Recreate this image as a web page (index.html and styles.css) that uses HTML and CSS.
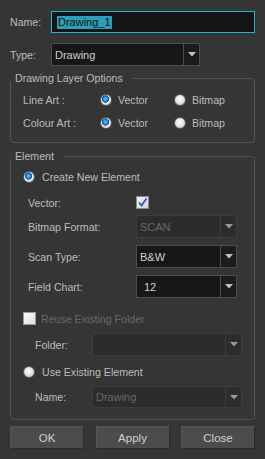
FILE: index.html
```html
<!DOCTYPE html>
<html>
<head>
<meta charset="utf-8">
<link rel="stylesheet" href="styles.css">
</head>
<body>
<div class="dialog">
  <div class="row row-name">
    <span class="lbl top-lbl">Name:</span>
    <div class="input-name"><span class="sel">Drawing_1</span></div>
  </div>
  <div class="row row-type">
    <span class="lbl top-lbl">Type:</span>
    <div class="combo combo-type"><span class="val">Drawing</span><span class="btn"><svg width="8" height="5" viewBox="0 0 8 5"><polygon points="0,0 8,0 4,4.5" fill="#c2c2c2"/></svg></span></div>
  </div>

  <fieldset class="group group-layer">
    <legend>Drawing Layer Options</legend>
    <div class="opt-row">
      <span class="opt-lbl">Line Art :</span>
      <span class="radio-item"><span class="radio on"></span>Vector</span>
      <span class="radio-item"><span class="radio"></span>Bitmap</span>
    </div>
    <div class="opt-row gap">
      <span class="opt-lbl">Colour Art :</span>
      <span class="radio-item"><span class="radio on"></span>Vector</span>
      <span class="radio-item"><span class="radio"></span>Bitmap</span>
    </div>
  </fieldset>

  <fieldset class="group group-element">
    <legend>Element</legend>
    <div class="el-row create">
      <span class="radio on"></span><span class="el-text">Create New Element</span>
    </div>
    <div class="sub-row vec">
      <span class="sub-lbl">Vector:</span>
      <span class="check on"><svg width="11" height="11" viewBox="0 0 11 11"><polyline points="2,5.5 4.5,8.5 9.5,1.5" fill="none" stroke="#2a58c8" stroke-width="1.8"/></svg></span>
    </div>
    <div class="sub-row field">
      <span class="sub-lbl">Bitmap Format:</span>
      <div class="combo combo-sm disabled"><span class="val">SCAN</span><span class="btn"><svg width="8" height="5" viewBox="0 0 8 5"><polygon points="0,0 8,0 4,4.5" fill="#9a9a9a"/></svg></span></div>
    </div>
    <div class="sub-row field">
      <span class="sub-lbl">Scan Type:</span>
      <div class="combo combo-sm"><span class="val">B&amp;W</span><span class="btn"><svg width="8" height="5" viewBox="0 0 8 5"><polygon points="0,0 8,0 4,4.5" fill="#c2c2c2"/></svg></span></div>
    </div>
    <div class="sub-row field">
      <span class="sub-lbl">Field Chart:</span>
      <div class="combo combo-sm"><span class="val pad">12</span><span class="btn"><svg width="8" height="5" viewBox="0 0 8 5"><polygon points="0,0 8,0 4,4.5" fill="#c2c2c2"/></svg></span></div>
    </div>
    <div class="el-row reuse">
      <span class="check disabled"></span><span class="el-text dim">Reuse Existing Folder</span>
    </div>
    <div class="sub-row2 field">
      <span class="sub-lbl2">Folder:</span>
      <div class="combo combo-wide disabled"><span class="val"></span><span class="btn"><svg width="8" height="5" viewBox="0 0 8 5"><polygon points="0,0 8,0 4,4.5" fill="#9a9a9a"/></svg></span></div>
    </div>
    <div class="el-row use">
      <span class="radio"></span><span class="el-text">Use Existing Element</span>
    </div>
    <div class="sub-row2 field last">
      <span class="sub-lbl2">Name:</span>
      <div class="combo combo-wide disabled"><span class="val">Drawing</span><span class="btn"><svg width="8" height="5" viewBox="0 0 8 5"><polygon points="0,0 8,0 4,4.5" fill="#9a9a9a"/></svg></span></div>
    </div>
  </fieldset>

  <div class="buttons">
    <button class="pbtn">OK</button>
    <button class="pbtn">Apply</button>
    <button class="pbtn">Close</button>
  </div>
</div>
</body>
</html>
```

FILE: styles.css
```css
html, body {
  margin: 0;
  padding: 0;
  background: #353535;
}
body {
  width: 265px;
  height: 459px;
  overflow: hidden;
  font-family: "Liberation Sans", Arial, sans-serif;
  font-size: 10.6px;
  color: #bdbdbd;
}
.dialog {
  padding: 11px 10px 0 10px;
  display: flex;
  flex-direction: column;
}
.row {
  display: flex;
  align-items: center;
}
.top-lbl {
  width: 41px;
}
.row-name {
  height: 22px;
}
.input-name {
  box-sizing: border-box;
  width: 204px;
  height: 22px;
  background: #141414;
  border: 1px solid #27b3cf;
  display: flex;
  align-items: center;
  padding-left: 5px;
}
.sel {
  background: #2a9fb7;
  color: #101010;
  font-size: 11px;
  line-height: 13px;
  padding: 0 1px;
}
.row-type {
  margin-top: 10px;
  height: 23px;
}
.combo {
  box-sizing: border-box;
  display: flex;
  align-items: stretch;
  border: 1px solid #4c4c4c;
  background: #171717;
  color: #d0d0d0;
}
.combo .val {
  flex: 1;
  display: flex;
  align-items: center;
  padding-left: 3px;
  font-size: 11px;
}
.combo .val.pad {
  padding-left: 7px;
}
.combo .btn {
  width: 15px;
  border-left: 1px solid #4c4c4c;
  background: #1c1c1c;
  display: flex;
  align-items: center;
  justify-content: center;
}
.combo-type {
  width: 149px;
  height: 23px;
}
.combo.disabled {
  background: #2c2c2c;
  border-color: #3c3c3c;
  color: #686868;
}
.combo.disabled .btn {
  background: #2c2c2c;
  border-left-color: #3c3c3c;
}

.group {
  margin: 6px 0 0 0;
  padding: 0 0 11px 0;
  border: 1px solid #545454;
  border-radius: 4px;
  min-width: 0;
}
.group legend {
  padding: 0 9px 0 4px;
  margin-left: 0;
  line-height: 13px;
  color: #bdbdbd;
}
.group-element {
  margin-top: 7px;
}

.opt-row {
  display: flex;
  align-items: center;
  height: 16px;
  margin-top: 7px;
  padding-left: 12px;
}
.opt-lbl {
  width: 77px;
}
.radio-item {
  display: flex;
  align-items: center;
  width: 74px;
}
.radio-item .radio {
  margin-right: 6px;
}
.radio {
  box-sizing: border-box;
  display: inline-block;
  width: 12px;
  height: 12px;
  border-radius: 50%;
  border: 1px solid #5a5a5a;
  background: radial-gradient(circle at 45% 40%, #ffffff 0%, #e2e2e2 50%, #bdbdbd 100%);
  flex: none;
}
.radio.on {
  background:
    radial-gradient(circle at 45% 40%, #6ec0ff 0%, #1c82d8 30%, #0b4f8f 42%, transparent 48%),
    radial-gradient(circle at 45% 40%, #ffffff 0%, #e6e6e6 60%, #bdbdbd 100%);
}

.el-row {
  display: flex;
  align-items: center;
  padding-left: 12px;
}
.el-row .el-text {
  margin-left: 7px;
}
.el-row.create {
  margin-top: 7px;
  height: 14px;
}
.el-row.reuse {
  margin-top: 14px;
  height: 13px;
}
.el-row.reuse .el-text {
  margin-left: 5px;
}
.el-row.use {
  margin-top: 9px;
  height: 14px;
}
.el-text.dim {
  color: #686868;
}
.check {
  box-sizing: border-box;
  width: 13px;
  height: 13px;
  border: 1px solid #8a8a8a;
  background: linear-gradient(135deg, #f2f2f2 0%, #d4d4d4 100%);
  display: flex;
  align-items: center;
  justify-content: center;
  flex: none;
}
.check.disabled {
  border-color: #9a9a9a;
  background: linear-gradient(135deg, #fafafa 0%, #dedede 100%);
}
.sub-row {
  display: flex;
  align-items: center;
  padding-left: 17px;
}
.sub-lbl {
  width: 108px;
}
.sub-row.vec {
  margin-top: 12px;
  height: 13px;
}
.sub-row.field {
  margin-top: 7px;
}
.sub-row.vec + .sub-row.field {
  margin-top: 6px;
}
.combo-sm {
  width: 101px;
  height: 23px;
}
.sub-row2 {
  display: flex;
  align-items: center;
  padding-left: 24px;
  margin-top: 8px;
}
.sub-lbl2 {
  width: 57px;
}
.combo-wide {
  width: 150px;
  height: 23px;
}
.sub-row2.last {
  margin-top: 7px;
}
.sub-row2.last .combo-wide {
  height: 22px;
}

.buttons {
  display: flex;
  justify-content: space-between;
  margin-top: 6px;
  width: 245px;
}
.pbtn {
  box-sizing: border-box;
  width: 74px;
  height: 23px;
  background: #4c4c4c;
  border: 1px solid #2a2a2a;
  border-top-color: #555;
  border-left-color: #555;
  color: #d0d0d0;
  font-family: "Liberation Sans", Arial, sans-serif;
  font-size: 11.5px;
  padding: 0;
}
```
